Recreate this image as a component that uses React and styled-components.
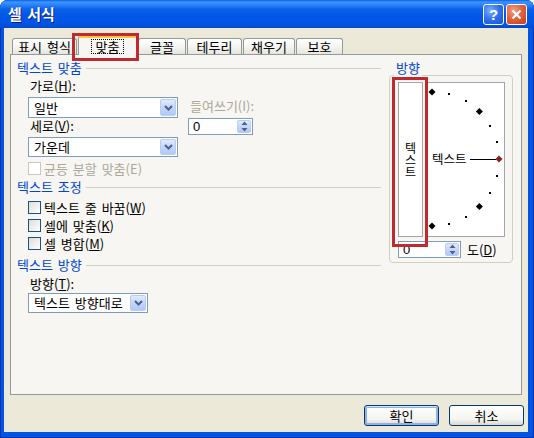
import React from "react";
import styled, { createGlobalStyle } from "styled-components";

const GlobalStyle = createGlobalStyle`
  html, body { margin: 0; padding: 0; background: #fff; }
  body {
    font-family: "Noto Sans CJK KR", "Liberation Sans", sans-serif;
    font-size: 13px;
    color: #000;
  }
  * { box-sizing: border-box; }
`;

const PANEL_BG = "#F7F6F2";
const GROUP_BLUE = "#0046D5";
const DISABLED = "#ACA899";

const Window = styled.div`
  width: 534px;
  height: 438px;
  display: flex;
  flex-direction: column;
  border-radius: 8px 8px 0 0;
  overflow: hidden;
  background: #0055E5;
  box-shadow: inset 1px 0 #0831A8, inset -1px 0 #0831A8, inset 0 -1px #0831A8;
`;

const TitleBar = styled.div`
  height: 28px;
  flex: none;
  display: flex;
  align-items: center;
  justify-content: space-between;
  padding: 0 7px 0 8px;
  background: linear-gradient(
    to bottom,
    #0A5FE5 0px,
    #3D95FF 2px,
    #2A82F8 5px,
    #0B63EC 9px,
    #0058E6 15px,
    #0055E5 22px,
    #0050DC 26px,
    #0046C8 28px
  );
`;

const Title = styled.div`
  color: #fff;
  font-weight: bold;
  font-size: 15px;
  line-height: 16px;
  word-spacing: 2px;
  text-shadow: 1px 1px #0A1883;
`;

const CaptionButtons = styled.div`
  display: flex;
  gap: 2px;
  margin-top: 1px;
`;

const CaptionBtn = styled.div`
  width: 21px;
  height: 21px;
  border: 1px solid #fff;
  border-radius: 3px;
  display: flex;
  align-items: center;
  justify-content: center;
  color: #fff;
  font-family: "Liberation Sans", sans-serif;
  font-weight: bold;
  font-size: 15px;
  background: ${(p) =>
    p.$close
      ? "radial-gradient(circle at 35% 30%, #F0A38A 0%, #E2633E 45%, #C63A18 100%)"
      : "radial-gradient(circle at 35% 30%, #7FB0FF 0%, #2F6FEA 50%, #1A52D6 100%)"};
`;

const Client = styled.div`
  flex: 1;
  margin: 0 6px 6px 4px;
  background: #ECE9D8;
  padding: 7px 4px 0 6px;
  display: flex;
  flex-direction: column;
`;

const TabStrip = styled.div`
  height: 19px;
  display: flex;
  align-items: flex-end;
  padding-left: 2px;
  position: relative;
  z-index: 2;
`;

const Tab = styled.div`
  position: relative;
  width: ${(p) => p.$w}px;
  height: ${(p) => (p.$active ? 20 : 16)}px;
  margin-right: 1px;
  margin-bottom: ${(p) => (p.$active ? -1 : 0)}px;
  border: 1px solid #919B9C;
  border-bottom: none;
  border-top: ${(p) => (p.$active ? "3px solid #FFC83C" : "1px solid #919B9C")};
  border-radius: 3px 3px 0 0;
  background: ${(p) =>
    p.$active ? PANEL_BG : "linear-gradient(#FFFFFF, #F4F4F0 55%, #E6E5DE)"};
  display: flex;
  justify-content: center;
  align-items: ${(p) => (p.$active ? "flex-start" : "center")};
  padding-top: ${(p) => (p.$active ? 1 : 0)}px;
  line-height: 14px;
  white-space: nowrap;
  word-spacing: 2px;
`;

const FocusText = styled.span`
  border: 1px dotted #000;
  padding: 0 4px;
  line-height: 13px;
`;

const RedMark = styled.div`
  position: absolute;
  left: ${(p) => p.$x}px;
  top: ${(p) => p.$y}px;
  width: ${(p) => p.$w}px;
  height: ${(p) => p.$h}px;
  border: 3px solid #BE2A2F;
  pointer-events: none;
  z-index: 5;
`;

const Panel = styled.div`
  width: 512px;
  height: 341px;
  border: 1px solid #919B9C;
  background: ${PANEL_BG};
  display: flex;
  align-items: flex-start;
  position: relative;
  z-index: 1;
`;

const LeftCol = styled.div`
  width: 364px;
  margin-left: 6px;
  padding-top: 5px;
  display: flex;
  flex-direction: column;
`;

const GroupHeader = styled.div`
  display: flex;
  align-items: center;
  height: 16px;
  margin-top: ${(p) => p.$mt || 0}px;
  color: ${GROUP_BLUE};
  line-height: 16px;
  word-spacing: 2px;
  white-space: nowrap;

  &::after {
    content: "";
    flex: 1;
    border-top: 1px solid #D0D0BF;
    margin-left: 4px;
    margin-top: 1px;
  }
`;

const AlignGrid = styled.div`
  margin: 2px 0 0 11px;
  display: grid;
  grid-template-columns: 150px 65px;
  grid-template-rows: 19px 21px 19px 20px;
  column-gap: 10px;
`;

const FieldLabel = styled.div`
  line-height: 16px;
  height: 16px;
  padding-left: ${(p) => p.$pl || 2}px;
  margin-top: ${(p) => p.$mt || 0}px;
  color: ${(p) => (p.$disabled ? DISABLED : "#000")};
  white-space: nowrap;
  word-spacing: 2px;
`;

const SelectBox = styled.div`
  width: ${(p) => p.$w}px;
  height: ${(p) => p.$h}px;
  margin-top: ${(p) => p.$mt || 0}px;
  margin-left: ${(p) => p.$ml || 0}px;
  border: 1px solid #7F9DB9;
  background: #fff;
  display: flex;
  align-items: center;
  padding: 1px;
  word-spacing: 2px;
`;

const SelectText = styled.span`
  flex: 1;
  padding-left: 4px;
  line-height: 14px;
  white-space: nowrap;
`;

const DropBtn = styled.div`
  width: 16px;
  align-self: stretch;
  border: 1px solid #B9CCF5;
  border-radius: 2px;
  background: linear-gradient(#E2EBFE, #C6D7FC 45%, #B2C8F7);
  display: flex;
  align-items: center;
  justify-content: center;
`;

const SpinBox = styled.div`
  width: ${(p) => p.$w}px;
  height: 17px;
  border: 1px solid #7F9DB9;
  background: #fff;
  display: flex;
  align-items: stretch;
  padding: 1px;
`;

const SpinValue = styled.span`
  flex: 1;
  padding-left: 3px;
  line-height: 13px;
  font-family: "Liberation Sans", sans-serif;
`;

const SpinBtn = styled.div`
  width: 14px;
  border: 1px solid #B9CCF5;
  border-radius: 2px;
  background: linear-gradient(#E2EBFE, #C6D7FC 45%, #B2C8F7);
  display: flex;
  align-items: center;
  justify-content: center;
`;

const CheckRow = styled.div`
  display: flex;
  align-items: center;
  gap: 3px;
  height: ${(p) => p.$h || 18}px;
  margin-left: 11px;
  margin-top: ${(p) => p.$mt || 0}px;
  color: ${(p) => (p.$disabled ? DISABLED : "#000")};
  word-spacing: 2px;
  white-space: nowrap;
`;

const CheckBox = styled.span`
  width: 13px;
  height: 13px;
  flex: none;
  border: 1px solid ${(p) => (p.$disabled ? "#CAC8BB" : "#1C5180")};
  background: ${(p) =>
    p.$disabled ? "#fff" : "linear-gradient(135deg, #DCDCD7, #FFFFFF)"};
`;

const OrientGroup = styled.div`
  position: relative;
  width: 124px;
  height: 188px;
  margin: 20px 0 0 8px;
  border: 1px solid #D0D0BF;
  border-radius: 4px;
  padding: 6px 0 0 8px;
`;

const GroupLegend = styled.div`
  position: absolute;
  top: -16px;
  left: 4px;
  padding: 0 2px;
  line-height: 16px;
  height: 16px;
  background: ${PANEL_BG};
  color: ${GROUP_BLUE};
`;

const OrientRow = styled.div`
  display: flex;
  gap: 4px;
  height: 155px;
`;

const VertBox = styled.div`
  width: 25px;
  border: 1px solid #A5A5A5;
  background: #fff;
  display: flex;
  flex-direction: column;
  align-items: center;
  justify-content: center;
  padding-top: 1px;
`;

const VertChar = styled.span`
  display: block;
  height: 12px;
  line-height: 12px;
  font-size: 12px;
`;

const DialBox = styled.div`
  width: 78px;
  border: 1px solid #A5A5A5;
  background: #fff;
`;

const DegreeRow = styled.div`
  display: flex;
  align-items: center;
  gap: 6px;
  margin-top: 4px;
  line-height: 16px;
`;

const ButtonRow = styled.div`
  display: flex;
  justify-content: flex-end;
  gap: 10px;
  margin-top: 10px;
`;

const DlgButton = styled.div`
  width: 75px;
  height: 21px;
  border: 1px solid #003C74;
  border-radius: 3px;
  display: flex;
  align-items: center;
  justify-content: center;
  line-height: 14px;
  background: linear-gradient(#FFFFFF, #F4F4F0 70%, #DCD8CE);
  box-shadow: ${(p) =>
    p.$default ? "inset 0 1px 0 #CEE7FF, inset 0 0 0 2px #8FB0EC" : "none"};
`;

const Chevron = () => (
  <svg width="9" height="6" viewBox="0 0 9 6">
    <path d="M1 1 L4.5 4.5 L8 1" fill="none" stroke="#4D6185" strokeWidth="2" />
  </svg>
);

const SpinArrows = () => (
  <svg width="7" height="11" viewBox="0 0 7 11">
    <path d="M3.5 0.5 L6.5 4 L0.5 4 Z" fill="#4D6185" />
    <path d="M0.5 7 L6.5 7 L3.5 10.5 Z" fill="#4D6185" />
  </svg>
);

const CloseGlyph = () => (
  <svg width="11" height="11" viewBox="0 0 11 11">
    <path d="M1.5 1.5 L9.5 9.5 M9.5 1.5 L1.5 9.5" stroke="#fff" strokeWidth="2.2" />
  </svg>
);

const DIAL = { cx: 4, cy: 76, r: 67 };

const dialMarks = [];
for (let a = 90; a >= -90; a -= 15) {
  const rad = (a * Math.PI) / 180;
  dialMarks.push({
    a,
    x: DIAL.cx + DIAL.r * Math.cos(rad),
    y: DIAL.cy - DIAL.r * Math.sin(rad),
    big: a % 45 === 0,
  });
}

const Dial = () => (
  <svg width="76" height="153" viewBox="0 0 76 153">
    {dialMarks.map((m) =>
      m.big ? (
        <polygon
          key={m.a}
          points={`${m.x},${m.y - 3.5} ${m.x + 3.5},${m.y} ${m.x},${m.y + 3.5} ${m.x - 3.5},${m.y}`}
          fill={m.a === 0 ? "#8B2323" : "#000"}
        />
      ) : (
        <rect key={m.a} x={Math.round(m.x) - 1} y={Math.round(m.y) - 1} width="2" height="2" fill="#000" />
      )
    )}
    <text
      x="4"
      y="80.5"
      fontSize="12.5"
      fontFamily='"Noto Sans CJK KR", sans-serif'
      fill="#000"
    >
      텍스트
    </text>
    <line x1="42" y1="76.5" x2="68" y2="76.5" stroke="#000" strokeWidth="1" />
  </svg>
);

const Select = ({ w, h, mt, ml, children }) => (
  <SelectBox $w={w} $h={h} $mt={mt} $ml={ml}>
    <SelectText>{children}</SelectText>
    <DropBtn>
      <Chevron />
    </DropBtn>
  </SelectBox>
);

const Spin = ({ w, value }) => (
  <SpinBox $w={w}>
    <SpinValue>{value}</SpinValue>
    <SpinBtn>
      <SpinArrows />
    </SpinBtn>
  </SpinBox>
);

const tabs = [
  { label: "표시 형식", w: 65 },
  { label: "맞춤", w: 59, active: true },
  { label: "글꼴", w: 48 },
  { label: "테두리", w: 55 },
  { label: "채우기", w: 52 },
  { label: "보호", w: 47 },
];

export default function App() {
  return (
    <>
      <GlobalStyle />
      <Window>
        <TitleBar>
          <Title>셀 서식</Title>
          <CaptionButtons>
            <CaptionBtn>?</CaptionBtn>
            <CaptionBtn $close>
              <CloseGlyph />
            </CaptionBtn>
          </CaptionButtons>
        </TitleBar>

        <Client>
          <TabStrip>
            {tabs.map((t) => (
              <Tab key={t.label} $w={t.w} $active={t.active}>
                {t.active ? <FocusText>{t.label}</FocusText> : t.label}
                {t.active && <RedMark $x={-7} $y={-5} $w={67} $h={28} />}
              </Tab>
            ))}
          </TabStrip>

          <Panel>
            <LeftCol>
              <GroupHeader>텍스트 맞춤</GroupHeader>
              <AlignGrid>
                <FieldLabel>
                  가로(<u>H</u>):
                </FieldLabel>
                <div />
                <Select w={150} h={21}>일반</Select>
                <FieldLabel $disabled $pl={0} $mt={1}>
                  들여쓰기(I):
                </FieldLabel>
                <FieldLabel>
                  세로(<u>V</u>):
                </FieldLabel>
                <Spin w={65} value="0" />
                <Select w={150} h={20}>가운데</Select>
                <div />
              </AlignGrid>
              <CheckRow $disabled $h={16} $mt={3}>
                <CheckBox $disabled />
                균등 분할 맞춤(E)
              </CheckRow>

              <GroupHeader $mt={3}>텍스트 조정</GroupHeader>
              <CheckRow $mt={3}>
                <CheckBox />
                <span>
                  텍스트 줄 바꿈(<u>W</u>)
                </span>
              </CheckRow>
              <CheckRow>
                <CheckBox />
                <span>
                  셀에 맞춤(<u>K</u>)
                </span>
              </CheckRow>
              <CheckRow>
                <CheckBox />
                <span>
                  셀 병합(<u>M</u>)
                </span>
              </CheckRow>

              <GroupHeader $mt={5}>텍스트 방향</GroupHeader>
              <FieldLabel $pl={13} $mt={3}>
                방향(<u>T</u>):
              </FieldLabel>
              <Select w={120} h={20} mt={1} ml={11}>
                텍스트 방향대로
              </Select>
            </LeftCol>

            <OrientGroup>
              <GroupLegend>방향</GroupLegend>
              <OrientRow>
                <VertBox>
                  <VertChar>텍</VertChar>
                  <VertChar>스</VertChar>
                  <VertChar>트</VertChar>
                </VertBox>
                <DialBox>
                  <Dial />
                </DialBox>
              </OrientRow>
              <DegreeRow>
                <Spin w={63} value="0" />
                <span>
                  도(<u>D</u>)
                </span>
              </DegreeRow>
              <RedMark $x={2} $y={1} $w={36} $h={170} />
            </OrientGroup>
          </Panel>

          <ButtonRow>
            <DlgButton $default>확인</DlgButton>
            <DlgButton>취소</DlgButton>
          </ButtonRow>
        </Client>
      </Window>
    </>
  );
}
